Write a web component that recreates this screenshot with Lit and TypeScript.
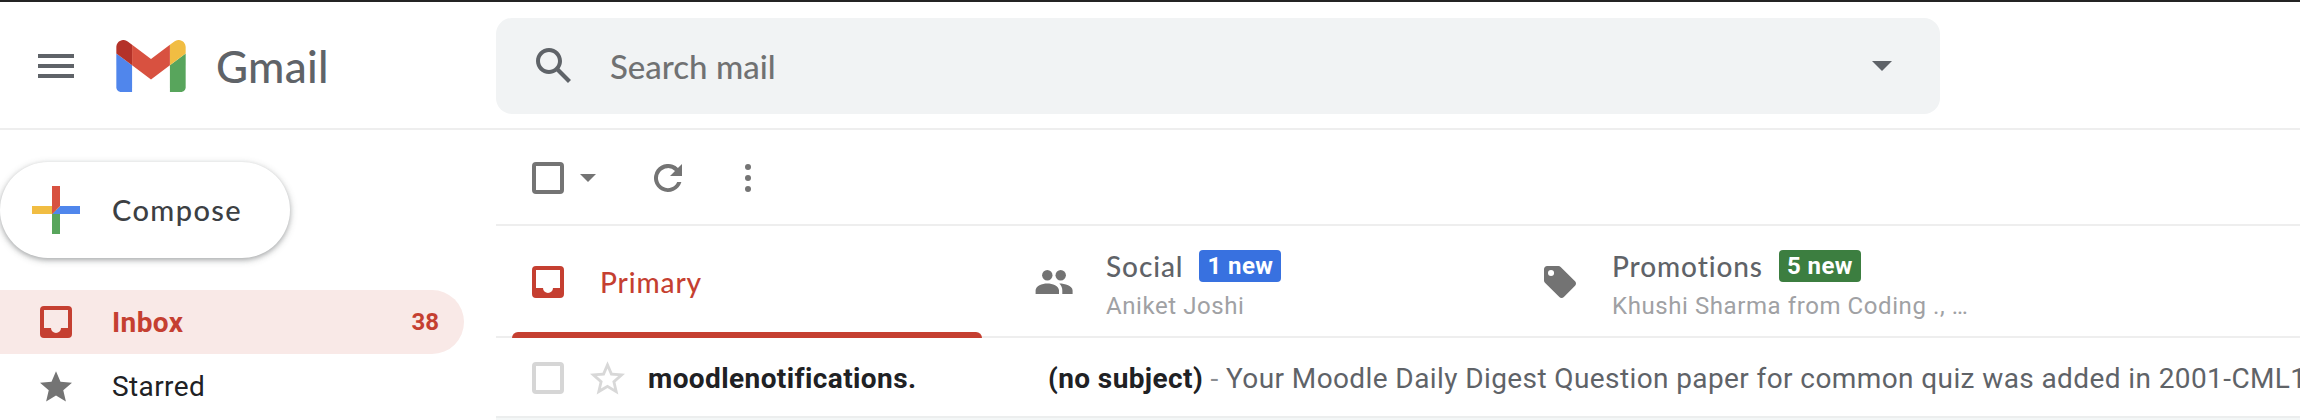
import { LitElement, html, css, svg, nothing } from "lit";
import { customElement, property } from "lit/decorators.js";
import { classMap } from "lit/directives/class-map.js";

const icon = (w: number, h: number, viewBox: string, body: unknown) =>
  html`<svg width=${w} height=${h} viewBox=${viewBox} fill="currentColor" aria-hidden="true">${body}</svg>`;

const menuIcon = icon(36, 24, "0 0 36 24", svg`<path d="M0 0h36v4H0zM0 10h36v4H0zM0 20h36v4H0z"/>`);

const gmailLogo = icon(70, 52, "52 42 88 66", svg`
  <path fill="#5086ec" d="M58 108h14V74L52 59v43c0 3.32 2.69 6 6 6"/>
  <path fill="#58a55c" d="M120 108h14c3.32 0 6-2.69 6-6V59l-20 15"/>
  <path fill="#f1bd42" d="M120 48v26l20-15v-8c0-7.42-8.47-11.65-14.4-7.2"/>
  <path fill="#d85140" d="M72 74V48l24 18 24-18v26L96 92"/>
  <path fill="#b43229" d="M52 51v8l20 15V48l-5.6-4.2c-5.94-4.45-14.4-.22-14.4 7.2"/>`);

const searchIcon = icon(48, 48, "0 0 24 24", svg`<path d="M20.49 19l-5.73-5.73C15.53 12.2 16 10.91 16 9.5 16 5.91 13.09 3 9.5 3S3 5.91 3 9.5 5.91 16 9.5 16c1.41 0 2.7-.47 3.77-1.24L19 20.49 20.49 19zM5 9.5C5 7.01 7.01 5 9.5 5S14 7.01 14 9.5 11.99 14 9.5 14 5 11.99 5 9.5z"/>`);

const plusIcon = icon(48, 48, "6 6 24 24", svg`
  <path fill="#58a55c" d="M16 16v14h4V20z"/>
  <path fill="#5086ec" d="M30 16H20l-4 4h14z"/>
  <path fill="#f1bd42" d="M6 16v4h10l4-4z"/>
  <path fill="#d85140" d="M20 16V6h-4v14z"/>`);

const inboxIcon = icon(32, 32, "0 0 32 32", svg`<path fill-rule="evenodd" d="M4 0h24a4 4 0 0 1 4 4v24a4 4 0 0 1-4 4H4a4 4 0 0 1-4-4V4a4 4 0 0 1 4-4zM4 4v18h7a5 5 0 0 0 10 0h7V4z"/>`);

const starIcon = icon(32, 31, "2 2 20 19.2", svg`<path d="M12 17.27L18.18 21l-1.64-7.03L22 9.24l-7.19-.61L12 2 9.19 8.63 2 9.24l5.46 4.73L5.82 21z"/>`);

const starOutlineIcon = icon(35, 34, "2 2 20 19.2", svg`<path d="M22 9.24l-7.19-.62L12 2 9.19 8.63 2 9.24l5.46 4.73L5.82 21 12 17.27 18.18 21l-1.63-7.03L22 9.24zM12 15.4l-3.76 2.27 1-4.28-3.32-2.88 4.38-.38L12 6.1l1.71 4.04 4.38.38-3.32 2.88 1 4.28L12 15.4z"/>`);

const refreshIcon = icon(28, 28, "0 0 28 28", svg`<path d="M23.9 4.1A14 14 0 1 0 27.4 18H23.2A10 10 0 1 1 21 7L16 12H28V0Z"/>`);

const moreIcon = icon(6, 28, "0 0 6 28", svg`<circle cx="3" cy="3" r="3"/><circle cx="3" cy="14" r="3"/><circle cx="3" cy="25" r="3"/>`);

const peopleIcon = icon(38, 24, "0 1 38 24", svg`
  <circle cx="12.3" cy="6.2" r="5.2"/><circle cx="25.7" cy="6.2" r="5.2"/>
  <path d="M.6 25v-3.6C.6 17 7 14.4 12.3 14.4S24 17 24 21.4V25zM24.3 14.6C30 14.6 37.6 17 37.6 21.5V25H27.3v-3.5C27.3 18.8 26.3 16.5 24.3 14.6z"/>`);

const tagIcon = icon(32, 32, "2 2 20 20", svg`<path fill-rule="evenodd" d="M21.41 11.58l-9-9C12.05 2.22 11.55 2 11 2H4c-1.1 0-2 .9-2 2v7c0 .55.22 1.05.59 1.42l9 9c.36.36.86.58 1.41.58.55 0 1.05-.22 1.41-.59l7-7c.37-.36.59-.86.59-1.41 0-.55-.23-1.06-.59-1.42zM6.4 8.3a1.9 1.9 0 1 1 0-3.8 1.9 1.9 0 0 1 0 3.8z"/>`);

const caret = (w: number, h: number) => icon(w, h, "0 0 20 10", svg`<path d="M0 0h20L10 10z"/>`);

@customElement("mail-header")
class MailHeader extends LitElement {
  static styles = css`
    :host {
      display: grid;
      grid-template-columns: 496px 1444px;
      align-items: center;
      box-sizing: border-box;
      height: 130px;
      padding-top: 2px;
      border-top: 2px solid #242424;
      border-bottom: 2px solid #eeeeee;
      color: #5f6368;
      font-family: Lato, sans-serif;
    }
    svg { display: block; flex: none; }
    .brand { display: flex; align-items: center; padding-left: 38px; }
    .logo { margin: 0 30px 0 42px; }
    .name { font-size: 44px; font-weight: 500; letter-spacing: 0.3px; line-height: 60px; padding-bottom: 1px; }
    .search {
      display: flex;
      align-items: center;
      height: 96px;
      box-sizing: border-box;
      padding: 0 48px 0 34px;
      border-radius: 16px;
      background: #f1f3f4;
    }
    .query {
      flex: 1;
      padding: 0 0 1px 32px;
      font-size: 33px;
      font-weight: 500;
      line-height: 44px;
      letter-spacing: 0;
      color: #707172;
    }
  `;
  render() {
    return html`
      <div class="brand">
        ${menuIcon}
        <div class="logo">${gmailLogo}</div>
        <span class="name">Gmail</span>
      </div>
      <div class="search">
        ${searchIcon}
        <span class="query">Search mail</span>
        ${caret(20, 10)}
      </div>`;
  }
}

@customElement("mail-sidebar")
class MailSidebar extends LitElement {
  static styles = css`
    :host { display: block; padding-top: 32px; font-family: Roboto, sans-serif; }
    svg { display: block; flex: none; }
    .compose {
      display: flex;
      align-items: center;
      gap: 32px;
      box-sizing: border-box;
      width: 290px;
      height: 96px;
      padding-left: 32px;
      border-radius: 48px;
      background: #fff;
      box-shadow: 0 2px 4px rgba(60, 64, 67, 0.3), 0 2px 6px 2px rgba(60, 64, 67, 0.15);
      color: #3c4043;
      font: 500 29px/40px Lato, sans-serif;
      letter-spacing: 1.4px;
    }
    .compose span { padding-bottom: 1px; }
    nav { margin-top: 32px; }
    .item {
      display: flex;
      align-items: center;
      box-sizing: border-box;
      width: 464px;
      height: 64px;
      padding: 0 25px 0 40px;
      border-radius: 0 32px 32px 0;
      color: #202124;
      font-size: 28px;
      letter-spacing: 0.4px;
    }
    .item svg { color: #747474; }
    .item.active { background: #f9e9e7; color: #c53f31; font-weight: 700; letter-spacing: 0.4px; }
    .item.active svg { color: #c53f31; }
    .label { flex: 1; padding-left: 40px; }
    .count { font-size: 24px; letter-spacing: 0; }
  `;
  render() {
    return html`
      <div class="compose">${plusIcon}<span>Compose</span></div>
      <nav>
        <div class="item active">${inboxIcon}<span class="label">Inbox</span><span class="count">38</span></div>
        <div class="item">${starIcon}<span class="label">Starred</span></div>
      </nav>`;
  }
}

@customElement("mail-tab")
class MailTab extends LitElement {
  @property() label = "";
  @property() sub = "";
  @property() badge = "";
  @property() tone = "blue";
  @property({ type: Boolean }) active = false;
  @property({ attribute: false }) glyph: unknown = nothing;

  static styles = css`
    :host { display: block; width: 506px; height: 112px; }
    svg { display: block; flex: none; }
    .tab {
      position: relative;
      display: flex;
      align-items: center;
      height: 112px;
      padding-left: 36px;
      gap: 36px;
    }
    .glyph { display: flex; justify-content: center; width: 32px; color: #737373; }
    .text { display: grid; gap: 8px; padding-top: 8px; }
    .top { display: flex; align-items: center; gap: 16px; height: 32px; }
    .label {
      padding-bottom: 1px;
      font: 500 28px/32px Lato, sans-serif;
      letter-spacing: 0.9px;
      color: #5f6368;
    }
    .badge {
      width: 82px;
      border-radius: 4px;
      color: #fff;
      font: 700 24px/32px Roboto, sans-serif;
      letter-spacing: 0.4px;
      text-align: center;
    }
    .blue { background: #3871e0; }
    .green { background: #3c7e40; }
    .sub {
      font: 400 24px/32px Roboto, sans-serif;
      letter-spacing: 0.58px;
      color: #a0a1a4;
      white-space: nowrap;
    }
    .active .glyph, .active .label { color: #c53f31; }
    .active .text { padding-top: 0; }
    .active::after {
      content: "";
      position: absolute;
      left: 16px;
      bottom: 0;
      width: 470px;
      height: 6px;
      border-radius: 6px 6px 0 0;
      background: #c53f31;
    }
  `;
  render() {
    return html`
      <div class=${classMap({ tab: true, active: this.active })}>
        <div class="glyph">${this.glyph}</div>
        <div class="text">
          <div class="top">
            <span class="label">${this.label}</span>
            ${this.badge ? html`<span class=${"badge " + this.tone}>${this.badge}</span>` : nothing}
          </div>
          ${this.sub ? html`<div class="sub">${this.sub}</div>` : nothing}
        </div>
      </div>`;
  }
}

@customElement("mail-list")
class MailList extends LitElement {
  static styles = css`
    :host { display: block; min-width: 0; font-family: Roboto, sans-serif; }
    svg { display: block; flex: none; }
    .toolbar {
      display: flex;
      align-items: center;
      box-sizing: border-box;
      height: 96px;
      padding: 2px 0 0 36px;
      border-bottom: 2px solid #eeeeee;
      color: #747474;
    }
    .box {
      flex: none;
      box-sizing: border-box;
      width: 32px;
      height: 32px;
      border: 4px solid #747474;
      border-radius: 4px;
    }
    .select { display: flex; align-items: center; gap: 16px; margin-right: 58px; }
    .more { margin-left: 63px; }
    .tabs { display: flex; height: 110px; border-bottom: 2px solid #eeeeee; }
    .row {
      display: flex;
      align-items: center;
      box-sizing: border-box;
      height: 80px;
      padding: 2px 0 0 36px;
      border-bottom: 2px solid #eceeee;
      font-size: 28px;
      letter-spacing: 0.4px;
      color: #5f6368;
      white-space: nowrap;
      overflow: hidden;
    }
    .row .box { border-color: #d6d6d6; }
    .star { margin: 0 23px 1px 26px; color: #d8d8d8; }
    .sender { flex: none; width: 400px; font-weight: 700; color: #202124; }
    .line { flex: 1; min-width: 0; overflow: hidden; }
    .subject { font-weight: 700; color: #202124; }
    .dash { color: #8b8e92; }
    .rest { height: 2px; background: #f4f7f7; }
  `;
  render() {
    return html`
      <div class="toolbar">
        <div class="select"><span class="box"></span>${caret(16, 8)}</div>
        ${refreshIcon}
        <div class="more">${moreIcon}</div>
      </div>
      <div class="tabs">
        <mail-tab label="Primary" active .glyph=${inboxIcon}></mail-tab>
        <mail-tab label="Social" badge="1 new" tone="blue" sub="Aniket Joshi" .glyph=${peopleIcon}></mail-tab>
        <mail-tab label="Promotions" badge="5 new" tone="green" sub="Khushi Sharma from Coding ., …" .glyph=${tagIcon}></mail-tab>
      </div>
      <div class="row">
        <span class="box"></span>
        <div class="star">${starOutlineIcon}</div>
        <span class="sender">moodlenotifications.</span>
        <span class="line"><span class="subject">(no subject)</span><span class="dash"> - </span>Your Moodle Daily Digest Question paper for common quiz was added in 2001-CML1</span>
      </div>
      <div class="rest"></div>`;
  }
}

@customElement("app-root")
class AppRoot extends LitElement {
  static styles = css`
    :host { display: block; height: 420px; overflow: hidden; background: #fff; }
    .body { display: grid; grid-template-columns: 496px minmax(0, 1fr); }
  `;
  render() {
    return html`
      <mail-header></mail-header>
      <div class="body">
        <mail-sidebar></mail-sidebar>
        <mail-list></mail-list>
      </div>`;
  }
}
